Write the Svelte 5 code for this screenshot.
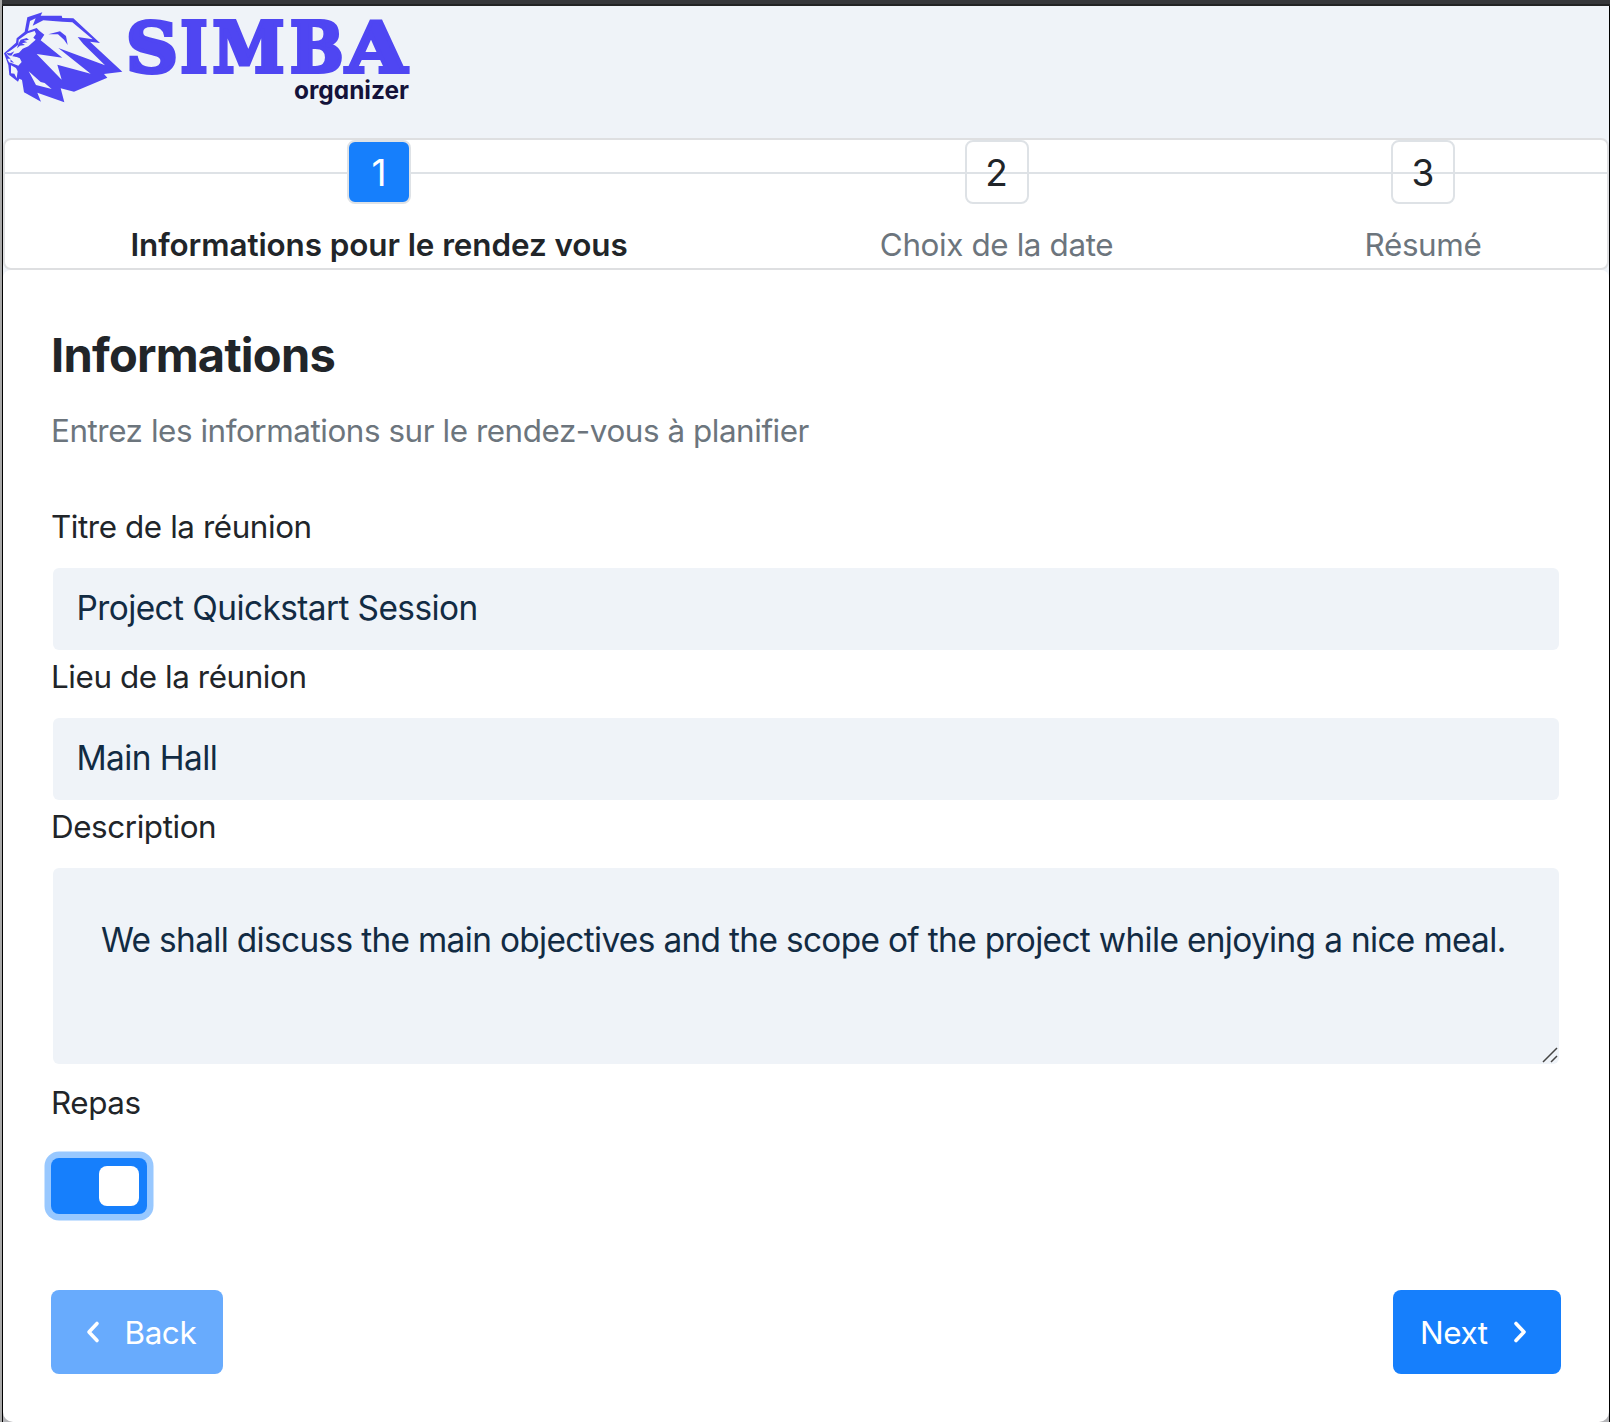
<script>
  const steps = [
    { n: 1, label: 'Informations pour le rendez vous', kind: 'lead' },
    { n: 2, label: 'Choix de la date', kind: 'mid' },
    { n: 3, label: 'Résumé', kind: 'end' }
  ];
  let current = $state(1);
  let title = $state('Project Quickstart Session');
  let place = $state('Main Hall');
  let description = $state('We shall discuss the main objectives and the scope of the project while enjoying a nice meal.');
  let meal = $state(true);
</script>

<div class="window">
  <div class="titlebar"></div>
  <header>
    <svg class="logo" width="420" height="110" viewBox="0 6 420 110" role="img" aria-label="SIMBA organizer">
      <g transform="scale(.33333)">
        <!-- mane and head silhouette -->
        <path class="brand" d="M74 95 82 52 127 37 122 47 185 47 187 54 220 55 300 129 270 125 367 215 312 222 322 233 222 275 182 265 193 307 112 278 123 305 72 277 66 240 58 236 54 245 28 225 25 195 12 160 48 128 50 115Z" />
        <!-- hair strands -->
        <path class="paper" d="M84 93 90 63 107 55 98 77 130 61 187 65 217 67 278 118 233 111 250 132 315 196 175 144 272 221 172 194 185 239 110 162 187 173 122 121 133 104 118 92 110 84Z" />
        <!-- face -->
        <path class="paper" d="M83 100 104 93 108 102 100 113 107 119 85 139 68 146 57 158 42 162 37 169 58 172 65 186 55 197 36 190 27 187 22 176 32 176 24 168 18 160 33 151 47 140 55 134 56 119Z" />
        <path class="brand" d="M56 130 62 119 80 114 87 119 71 122 82 127 66 130 75 135 60 137 51 145ZM19 159 31 160 43 154 34 167 25 166ZM36 165 60 168 66 177 52 172ZM31 178 42 188 32 186Z" />
        <path class="paper" d="M33 196 48 204 53 214 50 235 43 221 33 220ZM86 214 122 246 134 249 155 267 108 255Z" />
        <path class="brand" d="M145 103 180 94 198 108 203 135 192 119 174 103Z" />
      </g>
      <g class="wordmark">
        <text x="126" y="71.500" textLength="52" lengthAdjust="spacingAndGlyphs">S</text>
        <text x="180.500" y="71.500" textLength="27" lengthAdjust="spacingAndGlyphs">I</text>
        <text x="212.500" y="71.500" textLength="72" lengthAdjust="spacingAndGlyphs">M</text>
        <text x="290" y="71.500" textLength="53.500" lengthAdjust="spacingAndGlyphs">B</text>
        <text x="346" y="71.500" textLength="60.500" lengthAdjust="spacingAndGlyphs">A</text>
      </g>
      <text class="tagline" x="294" y="98.500" textLength="115" lengthAdjust="spacingAndGlyphs">organizer</text>
    </svg>
  </header>

  <nav class="stepper">
    {#each steps as s}
      <div class="step" class:active={s.n === current}>
        <span class="num">{s.n}</span>
        <span class="name {s.kind}">{s.label}</span>
      </div>
    {/each}
  </nav>

  <main>
    <h1>Informations</h1>
    <p class="sub">Entrez les informations sur le rendez-vous à planifier</p>

    <label for="title">Titre de la réunion</label>
    <input id="title" type="text" bind:value={title} />
    <label for="place">Lieu de la réunion</label>
    <input id="place" type="text" bind:value={place} />
    <label for="description">Description</label>
    <div class="area">
      <textarea id="description" spellcheck="false" bind:value={description}></textarea>
      <svg class="grip" width="18" height="18" viewBox="0 0 18 18"><path d="M2 16 16 2M10 16 16 10" /></svg>
    </div>
    <label for="meal">Repas</label>
    <button id="meal" class="toggle" class:on={meal} role="switch" aria-checked={meal} aria-label="Repas" onclick={() => (meal = !meal)}>
      <span class="knob"></span>
    </button>

    <footer>
      <button class="btn back" disabled={current === 1}>
        <svg width="16" height="24" viewBox="0 0 16 24"><path d="M12 3.500 4 12 12 20.500" /></svg>
        <span>Back</span>
      </button>
      <button class="btn next">
        <span>Next</span>
        <svg width="16" height="24" viewBox="0 0 16 24"><path d="M4 3.500 12 12 4 20.500" /></svg>
      </button>
    </footer>
  </main>
</div>

<style>
  :global(body) { margin: 0; background: #b0b0b0; }
  .window {
    box-sizing: border-box;
    width: 1610px;
    height: 1422px;
    overflow: hidden;
    display: flex;
    flex-direction: column;
    border-left: 2px solid #a9a9a9;
    font-family: Inter, "Liberation Sans", sans-serif;
    font-size: 31.4px;
    line-height: 50px;
    color: #212529;
    background: #eff3f8;
    box-shadow: inset 1px 0 #000, inset -1px 0 #000;
  }
  .titlebar {
    flex: none;
    box-sizing: border-box;
    height: 6px;
    background: #36373a;
    border-bottom: 2px solid #222324;
  }
  header { flex: none; height: 132px; }
  .logo { display: block; margin-left: -2px; overflow: visible; }
  .brand { fill: #4f46f2; }
  .paper { fill: #eff3f8; }
  .wordmark {
    font: bold 70px "DejaVu Serif", serif;
    fill: #4f46f2;
    stroke: #4f46f2;
    stroke-width: 4px;
  }
  .tagline {
    font: 700 25.5px Inter, sans-serif;
    font-feature-settings: "cv11";
    fill: #14123a;
  }

  .stepper {
    flex: none;
    position: relative;
    display: grid;
    grid-template-columns: 748px 487px 366px;
    box-sizing: border-box;
    height: 132px;
    margin: 0 1px;
    border: 2px solid #dedfe1;
    border-radius: 8px;
    background: #fff;
  }
  /* connecting rule behind the step numbers */
  .stepper::before {
    content: "";
    position: absolute;
    left: 0;
    right: 0;
    top: 32px;
    height: 2px;
    background: #dee2e6;
  }
  .step {
    position: relative;
    display: flex;
    flex-direction: column;
    align-items: center;
    gap: 16px;
    color: #6c757d;
  }
  .num {
    box-sizing: border-box;
    width: 64px;
    height: 64px;
    border: 2px solid #dee2e6;
    border-radius: 8px;
    text-align: center;
    font-size: 37px;
    line-height: 61px;
    color: #212529;
  }
  .active .num { color: #fff; background: #167ffc; }
  .name { height: 48px; white-space: nowrap; }
  .active .name { color: #212529; font-weight: 600; }
  .lead { letter-spacing: -.07px; }
  .mid { letter-spacing: -.38px; }
  .end { letter-spacing: -.35px; }

  main {
    flex: 1;
    box-sizing: border-box;
    display: flex;
    flex-direction: column;
    margin: 0 1px;
    padding: 57px 48px 0;
    border-radius: 8px 8px 10px 10px;
    background: #fff;
    box-shadow: 0 20px #b5b5b8;
  }
  h1 {
    margin: 0 0 23px;
    font-size: 47px;
    line-height: 56px;
    font-weight: 700;
    letter-spacing: -.75px;
  }
  .sub {
    margin: 0 0 46px;
    color: #6c757d;
    letter-spacing: -.44px;
  }
  label { letter-spacing: -.42px; }
  input, textarea {
    box-sizing: border-box;
    display: block;
    border: 0;
    outline: 0;
    border-radius: 6px;
    background: #eff3f8;
    color: #122b43;
    font-family: inherit;
    font-size: 33.4px;
  }
  input {
    height: 82px;
    margin: 16px 2px 2px;
    padding: 0 24px 2px 23.5px;
    letter-spacing: -.57px;
  }
  .area { position: relative; margin: 16px 2px 14px; }
  textarea {
    width: 100%;
    height: 196px;
    padding: 48px 0 0 48px;
    resize: none;
    overflow: hidden;
    line-height: 48px;
    letter-spacing: -.66px;
  }
  .grip { position: absolute; right: 0; bottom: 0; fill: none; stroke: #444; stroke-width: 1.5px; }
  .toggle {
    align-self: flex-start;
    box-sizing: border-box;
    width: 96px;
    height: 56px;
    margin-top: 30px;
    padding: 8px;
    display: flex;
    border: 0;
    border-radius: 8px;
    background: #adb5bd;
    box-shadow: 0 0 0 6.500px #98c8ff;
  }
  .toggle.on { justify-content: flex-end; background: #167ffc; }
  .knob { width: 40px; height: 40px; border-radius: 8px; background: #fff; }
  footer { display: flex; justify-content: space-between; margin-top: 76px; }
  .btn {
    box-sizing: border-box;
    height: 84px;
    display: flex;
    align-items: center;
    border: 0;
    border-radius: 8px;
    padding: 0;
    background: #167ffc;
    color: #fff;
    font: 400 31.4px/48px Inter, sans-serif;
  }
  .btn span { padding-top: 2px; }
  .btn svg { fill: none; stroke: #fff; stroke-width: 3.600px; stroke-linecap: round; stroke-linejoin: round; }
  .back { width: 172px; padding-left: 34px; gap: 23.5px; background: #68abfd; letter-spacing: -.4px; }
  .next { width: 168px; padding-left: 27px; gap: 24.5px; letter-spacing: -.4px; }
</style>
